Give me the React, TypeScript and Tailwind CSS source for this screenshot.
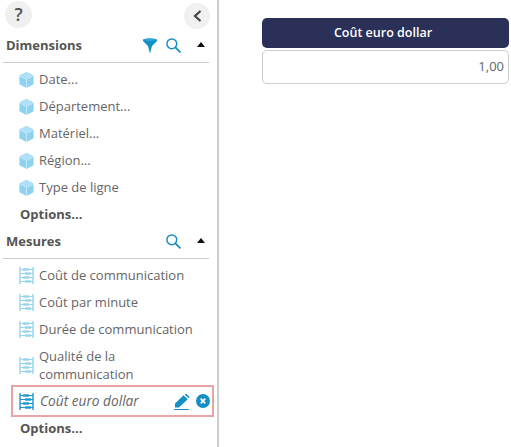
import React from "react";

const Cube = () => (
  <svg width="15" height="16" viewBox="0 0 15 16" className="shrink-0">
    <path d="M7.5 0 L14.6 3.4 V12.2 L7.5 16 L0.4 12.2 V3.4 Z" fill="#8dd2f1" />
    <path d="M7.5 0 L14.6 3.4 L7.5 7 L0.4 3.4 Z" fill="#aee0f6" />
    <path d="M0.4 3.8 L7.5 7.4 L14.6 3.8 M7.5 7.4 V16" fill="none" stroke="#d4eefa" strokeWidth="0.8" />
  </svg>
);

const Measure = ({ dark = false }: { dark?: boolean }) => {
  const c = dark ? "#1b96cf" : "#97d5f1";
  return (
    <svg width="15" height="17" viewBox="0 0 15 17" className="shrink-0">
      <path d="M1 0 V17 M14 0 V17" stroke={c} strokeWidth="1.4" />
      {[2, 6, 10, 14].map((y) => (
        <path key={y} d={`M1 ${y + 0.5} H14`} stroke={c} strokeWidth="1" />
      ))}
      {[2, 6, 10, 14].map((y, i) => (
        <path key={y} d={`M${i % 2 ? 6 : 4} ${y + 0.5} H${i % 2 ? 12 : 10}`} stroke={c} strokeWidth="2.4" />
      ))}
    </svg>
  );
};

const Search = () => (
  <svg width="15" height="15" viewBox="0 0 15 15" fill="none" stroke="#1590c4" strokeWidth="1.5">
    <circle cx="5.8" cy="5.8" r="4.9" />
    <path d="M9.4 9.4 L14.4 14.4" strokeWidth="1.8" />
  </svg>
);

const Caret = () => (
  <svg width="8" height="5" viewBox="0 0 8 5">
    <path d="M0 5 L4 0 L8 5 Z" fill="#111" />
  </svg>
);

const Funnel = () => (
  <svg width="14" height="16" viewBox="0 0 14 16">
    <path d="M0 1.5 Q7 -1 14 1.5 V3 L9 8 L7 15.5 L5 8 L0 3 Z" fill="#1590c4" />
    <path d="M1 1.8 Q7 0 13 1.8 Q7 3.6 1 1.8 Z" fill="#35aee0" />
  </svg>
);

const Header = ({ title, funnel }: { title: string; funnel?: boolean }) => (
  <div className="mx-[3px] flex h-[31px] w-[206px] items-center justify-between border-b border-[#cccccc] pb-[3px] pl-[3px]">
    <span className="text-[13px] font-bold text-[#555555]">{title}</span>
    <div className="flex items-center">
      {funnel && <span className="mr-[9px] flex"><Funnel /></span>}
      <span className="mr-[16px] flex"><Search /></span>
      <span className="mb-[3px] mr-[4px] flex"><Caret /></span>
    </div>
  </div>
);

const Row = ({ icon, label }: { icon: React.ReactNode; label: string }) => (
  <div className="flex h-[27px] items-center gap-[5px] pl-[19px] text-[13px] text-[#666666]">
    {icon}
    <span>{label}</span>
  </div>
);

const Options = ({ short = false }: { short?: boolean }) => (
  <div className={`flex items-center pl-[20px] text-[13px] font-bold text-[#555555] ${short ? "h-[23px]" : "h-[27px]"}`}>Options...</div>
);

export default function App() {
  return (
    <div className="flex h-[447px] w-[511px] overflow-hidden bg-white [font-family:'Open_Sans',sans-serif]">
      <aside className="box-border h-full w-[219px] shrink-0 border-r-2 border-[#cccccc]">
        <div className="flex h-[32px] items-start justify-between pl-[5px] pr-[7px]">
          <div className="mt-[1px] flex h-[27px] w-[27px] items-center justify-center rounded-full bg-[#f0f0f0] text-[18px] font-semibold text-[#555555]">?</div>
          <div className="mt-[3px] flex h-[26px] w-[26px] items-center justify-center rounded-full bg-[#f0f0f0]">
            <svg width="9" height="12" viewBox="0 0 9 12" fill="none" stroke="#444444" strokeWidth="2.2">
              <path d="M7.5 1 L2 6 L7.5 11" />
            </svg>
          </div>
        </div>
        <Header title="Dimensions" funnel />
        <div className="pt-[3px]">
          <Row icon={<Cube />} label="Date..." />
          <Row icon={<Cube />} label="Département..." />
          <Row icon={<Cube />} label="Matériel..." />
          <Row icon={<Cube />} label="Région..." />
          <Row icon={<Cube />} label="Type de ligne" />
          <Options />
        </div>
        <Header title="Mesures" />
        <div className="pt-[3px]">
          <Row icon={<Measure />} label="Coût de communication" />
          <Row icon={<Measure />} label="Coût par minute" />
          <Row icon={<Measure />} label="Durée de communication" />
          <div className="flex h-[42px] items-center gap-[5px] pl-[19px] pt-[2px] text-[13px] leading-[18px] text-[#666666]">
            <Measure />
            <span>Qualité de la<br />communication</span>
          </div>
          <div className="ml-[11px] flex h-[32px] w-[203px] items-center border-2 border-[#e8a3a3] pl-[6px] pr-[2px]">
            <Measure dark />
            <span className="ml-[6px] flex-1 text-[13.7px] italic text-[#666666]">Coût euro dollar</span>
            <svg width="16" height="16" viewBox="0 0 16 16" className="mr-[6px] mt-[1px]">
              <path d="M1 9.5 L9.5 1.2 L13.8 5.2 L5 13.4 H1 Z M10.6 0.4 L11.4 -0.2 Q12 -0.4 12.5 0 L15.2 2.4 Q15.6 3 15.2 3.4 L14.6 4.2 Z" fill="#1590c4" />
              <path d="M0 15.5 H15" stroke="#1590c4" strokeWidth="1" />
            </svg>
            <svg width="14" height="14" viewBox="0 0 14 14">
              <circle cx="7" cy="7" r="7" fill="#1590c4" />
              <path d="M4.7 4.7 L9.3 9.3 M9.3 4.7 L4.7 9.3" stroke="#fff" strokeWidth="1.8" />
            </svg>
          </div>
          <Options short />
        </div>
      </aside>
      <main className="flex-1 pl-[43px] pr-[2px] pt-[18px]">
        <div className="flex h-[30px] items-center justify-center rounded-[5px] bg-[#2a3058] pr-[5px] pt-[1px] text-[12.5px] font-semibold text-white">
          Coût euro dollar
        </div>
        <div className="mt-[2px] flex h-[34px] items-center justify-end rounded-[5px] border border-[#cccccc] pr-[4px] text-[13px] text-[#666666]">
          1,00
        </div>
      </main>
    </div>
  );
}
